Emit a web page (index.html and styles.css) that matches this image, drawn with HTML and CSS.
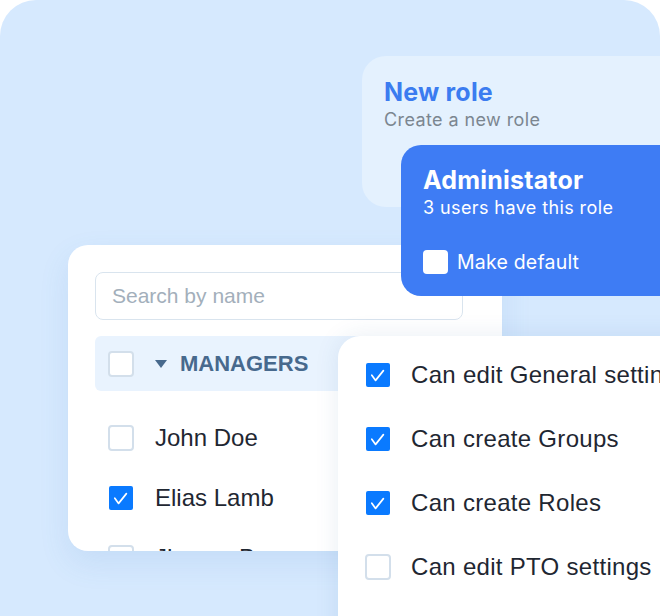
FILE: index.html
```html
<!DOCTYPE html>
<html lang="en">
<head>
  <meta charset="UTF-8" />
  <meta name="viewport" content="width=device-width, initial-scale=1.0"/>
  <title>Roles</title>
  <link rel="stylesheet" href="styles.css">
</head>
<body>

  <div class="stage">

    <div class="role-card new-role">
      <div class="role-title">New role</div>
      <div class="role-sub">Create a new role</div>
    </div>

    <div class="people-card">
      <div class="search">Search by name</div>

      <div class="group-row">
        <span class="check"></span>
        <span class="caret"></span>
        <span class="group-name">MANAGERS</span>
      </div>

      <div class="person">
        <span class="check"></span>
        <span>John Doe</span>
      </div>
      <div class="person">
        <span class="check on">
          <svg viewBox="0 0 23 23"><polyline points="5.8,12.2 9.6,17.4 17.4,7.6" /></svg>
        </span>
        <span>Elias Lamb</span>
      </div>
      <div class="person">
        <span class="check"></span>
        <span>Jhonny Brown</span>
      </div>
    </div>

    <div class="role-card admin-role">
      <div class="role-title">Administator</div>
      <div class="role-sub">3 users have this role</div>
      <label class="make-default">
        <span class="white-box"></span>
        Make default
      </label>
    </div>

    <div class="perm-card">
      <div class="perm">
        <span class="check on">
          <svg viewBox="0 0 23 23"><polyline points="5.8,12.2 9.6,17.4 17.4,7.6" /></svg>
        </span>
        <span>Can edit General settings</span>
      </div>
      <div class="perm">
        <span class="check on">
          <svg viewBox="0 0 23 23"><polyline points="5.8,12.2 9.6,17.4 17.4,7.6" /></svg>
        </span>
        <span>Can create Groups</span>
      </div>
      <div class="perm">
        <span class="check on">
          <svg viewBox="0 0 23 23"><polyline points="5.8,12.2 9.6,17.4 17.4,7.6" /></svg>
        </span>
        <span>Can create Roles</span>
      </div>
      <div class="perm">
        <span class="check"></span>
        <span>Can edit PTO settings</span>
      </div>
    </div>

  </div>

</body>
</html>
```

FILE: styles.css
```css
body {
  margin: 0;
  background-color: #ffffff;
  font-family: "Liberation Sans", Arial, sans-serif;
  color: #1f2732;
}

.stage {
  position: relative;
  width: 660px;
  height: 616px;
  overflow: hidden;
  background-color: #d6e9fe;
  border-radius: 36px 36px 0 0;
}

/* role cards (top right) */
.role-card {
  position: absolute;
  width: 340px;
  height: 151px;
  box-sizing: border-box;
  padding: 22px 22px 0 22px;
  font-family: Inter, "Liberation Sans", sans-serif;
}

.new-role {
  left: 362px;
  top: 56px;
  background-color: #e4f1fe;
  border-radius: 24px;
}

.admin-role {
  left: 401px;
  top: 145px;
  padding-top: 21px;
  background-color: #3e7cf4;
  border-radius: 20px;
  color: #ffffff;
}

.role-title {
  font-size: 25px;
  line-height: 29px;
  font-weight: 700;
  letter-spacing: 0.2px;
}

.new-role .role-title {
  color: #3b7cf0;
}

.role-sub {
  font-size: 18px;
  line-height: 22px;
  margin-top: 2px;
  letter-spacing: 0.4px;
}

.new-role .role-sub {
  color: #7b8690;
}

.make-default {
  display: flex;
  align-items: center;
  gap: 9px;
  margin-top: 31px;
  font-size: 19.5px;
  line-height: 24px;
  letter-spacing: 0.2px;
}

.white-box {
  width: 25px;
  height: 24px;
  background-color: #ffffff;
  border-radius: 4px;
}

/* people list card */
.people-card {
  position: absolute;
  left: 68px;
  top: 245px;
  width: 434px;
  height: 306px;
  box-sizing: border-box;
  padding: 27px 39px 0 27px;
  background-color: #ffffff;
  border-radius: 20px;
  overflow: hidden;
  box-shadow: 0 12px 30px rgba(70, 130, 200, 0.12);
}

.search {
  height: 48px;
  box-sizing: border-box;
  border: 1px solid #d9e4ee;
  border-radius: 8px;
  padding-left: 16px;
  display: flex;
  align-items: center;
  font-size: 21px;
  color: #a3afbb;
}

.group-row {
  margin-top: 16px;
  height: 55px;
  display: flex;
  align-items: center;
  padding-left: 13px;
  background-color: #e9f3fe;
  border-radius: 6px;
}

.caret {
  width: 0;
  height: 0;
  margin-left: 21px;
  border-left: 6px solid transparent;
  border-right: 6px solid transparent;
  border-top: 8px solid #47698d;
}

.group-name {
  margin-left: 13px;
  font-size: 22px;
  font-weight: 700;
  color: #47698d;
}

.person {
  display: flex;
  align-items: center;
  gap: 21px;
  height: 60px;
  padding-left: 13px;
  font-size: 24px;
}

.group-row + .person {
  margin-top: 17px;
}

/* checkboxes */
.check {
  flex: none;
  width: 26px;
  height: 26px;
  box-sizing: border-box;
  border: 2px solid #d3dfeb;
  border-radius: 4px;
  background-color: #ffffff;
}

.check.on {
  border: 1.5px solid transparent;
  background-color: #0a7aff;
  background-clip: padding-box;
  border-radius: 3px;
}

.check svg {
  display: block;
  width: 23px;
  height: 23px;
}

.check polyline {
  fill: none;
  stroke: #ffffff;
  stroke-width: 1.7;
  stroke-linecap: round;
  stroke-linejoin: round;
}

/* permissions card */
.perm-card {
  position: absolute;
  left: 338px;
  top: 336px;
  width: 360px;
  height: 320px;
  box-sizing: border-box;
  padding: 7px 0 0 27px;
  background-color: #ffffff;
  border-radius: 22px;
  box-shadow: 0 0 24px rgba(40, 90, 150, 0.10);
}

.perm {
  display: flex;
  align-items: center;
  gap: 20px;
  height: 64px;
  font-size: 24px;
  letter-spacing: 0.3px;
  white-space: nowrap;
}
```
